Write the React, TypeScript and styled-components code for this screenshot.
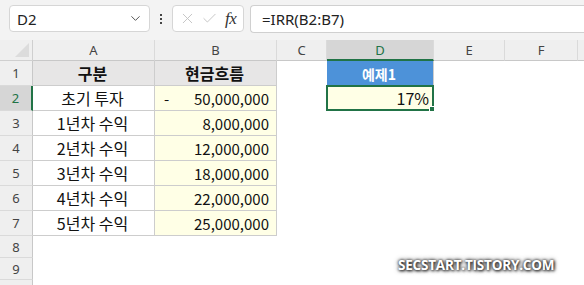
import React from "react";
import styled, { createGlobalStyle } from "styled-components";
import { ChevronDown, X, Check } from "lucide-react";

const GlobalStyle = createGlobalStyle`
  body {
    margin: 0;
    background: #fff;
    font-family: "Noto Sans", "Noto Sans CJK KR", sans-serif;
  }
`;

const GREEN = "#217346";

const Page = styled.div`
  position: relative;
  width: 584px;
  height: 285px;
  overflow: hidden;
  background: #fff;
`;

const FormulaBar = styled.div`
  height: 40px;
  box-sizing: border-box;
  background: #f3f3f3;
  display: flex;
  align-items: flex-start;
  padding: 5px 0 0 9px;
`;

const NameBox = styled.div`
  width: 141px;
  height: 27px;
  box-sizing: border-box;
  background: #fff;
  border: 1px solid #d6d6d6;
  border-radius: 4px;
  display: flex;
  align-items: center;
  justify-content: space-between;
  padding: 0 6px 0 7px;
  font-size: 15px;
  color: #222;
`;

const Dots = styled.div`
  width: 22px;
  height: 27px;
  display: flex;
  flex-direction: column;
  align-items: center;
  justify-content: center;
  gap: 2px;
  span {
    width: 2px;
    height: 2px;
    background: #444;
  }
`;

const FxBox = styled.div`
  width: 72px;
  height: 27px;
  box-sizing: border-box;
  background: #fff;
  border: 1px solid #d6d6d6;
  border-radius: 4px;
  display: flex;
  align-items: center;
  padding: 0 0 0 6px;
  gap: 5px;
  color: #c2c2c2;
`;

const Fx = styled.span`
  font-family: "Liberation Serif", serif;
  font-style: italic;
  font-size: 17px;
  color: #333;
  margin-left: 2px;
  letter-spacing: -0.5px;
`;

const FormulaInput = styled.div`
  flex: 1;
  margin-left: 6px;
  height: 28px;
  box-sizing: border-box;
  background: #fff;
  border: 1px solid #d0d0d0;
  border-right: none;
  border-radius: 4px 0 0 4px;
  display: flex;
  align-items: center;
  padding-left: 11px;
  font-size: 15px;
  color: #222;
`;

const Sheet = styled.div`
  display: grid;
  grid-template-columns: 33px 122px 122px 50px 107px 71px 73px 1fr;
  grid-template-rows: 21px repeat(7, 25px) repeat(3, 22px);
`;

const Corner = styled.div`
  background: #efefef;
  border-right: 1px solid #cfcfcf;
  border-bottom: 1px solid #cfcfcf;
  box-sizing: border-box;
  position: relative;
  &::after {
    content: "";
    position: absolute;
    right: 3px;
    bottom: 3px;
    border-left: 14px solid transparent;
    border-bottom: 14px solid #dcdcdc;
  }
`;

const ColHead = styled.div<{ $active?: boolean }>`
  box-sizing: border-box;
  background: ${(p) => (p.$active ? "#d6d6d6" : "#efefef")};
  border-right: 1px solid #dadada;
  border-bottom: ${(p) => (p.$active ? `2px solid ${GREEN}` : "1px solid #c8c8c8")};
  display: flex;
  align-items: center;
  justify-content: center;
  font-size: 13px;
  color: ${(p) => (p.$active ? GREEN : "#444")};
`;

const RowHead = styled.div<{ $active?: boolean }>`
  box-sizing: border-box;
  background: ${(p) => (p.$active ? "#d6d6d6" : "#efefef")};
  border-right: ${(p) => (p.$active ? `2px solid ${GREEN}` : "1px solid #c8c8c8")};
  border-bottom: 1px solid #dadada;
  display: flex;
  align-items: center;
  justify-content: center;
  font-size: 13px;
  color: ${(p) => (p.$active ? GREEN : "#444")};
`;

type Kind = "empty" | "head" | "label" | "value" | "title" | "result";

const Cell = styled.div<{ $kind: Kind }>`
  box-sizing: border-box;
  display: flex;
  align-items: center;
  position: relative;
  font-family: "Noto Sans CJK KR", "Noto Sans", sans-serif;
  font-size: ${(p) => (p.$kind === "head" || p.$kind === "label" ? "16px" : "15px")};
  color: #111;
  padding: 0 7px 0 5px;
  justify-content: ${(p) =>
    p.$kind === "value" || p.$kind === "result" ? "flex-end" : "center"};
  background: ${(p) =>
    p.$kind === "head"
      ? "#e7e6e6"
      : p.$kind === "value" || p.$kind === "result"
      ? "#ffffe6"
      : p.$kind === "title"
      ? "#4d92d9"
      : "#fff"};
  font-weight: ${(p) => (p.$kind === "head" || p.$kind === "title" ? 700 : 400)};
  ${(p) =>
    p.$kind === "head" || p.$kind === "label" || p.$kind === "value"
      ? "border-right: 1px solid #cdcdcd; border-bottom: 1px solid #cdcdcd;"
      : ""}
  ${(p) =>
    p.$kind === "title"
      ? "color: #fff; font-size: 14px; border-right: 1px solid #cdcdcd;"
      : ""}
  ${(p) =>
    p.$kind === "result"
      ? `border: 2px solid ${GREEN}; margin: -1px 0 0 -1px; padding-right: 3px; font-size: 16px;`
      : ""}
`;

const Minus = styled.span`
  position: absolute;
  left: 9px;
`;

const Handle = styled.span`
  position: absolute;
  right: -4px;
  bottom: -4px;
  width: 5px;
  height: 5px;
  background: ${GREEN};
  border: 1px solid #fff;
`;

const Watermark = styled.div`
  position: absolute;
  left: 398px;
  top: 256px;
  font-family: "Open Sans", "Noto Sans", sans-serif;
  font-weight: 700;
  font-size: 13.5px;
  letter-spacing: -0.2px;
  color: #fff;
  text-shadow: 0 0 3px #333, 1px 1px 3px #222, 0 0 5px #555;
`;

const cols = ["A", "B", "C", "D", "E", "F"];

const rows: { a: string; b: string }[] = [
  { a: "구분", b: "현금흐름" },
  { a: "초기 투자", b: "50,000,000" },
  { a: "1년차 수익", b: "8,000,000" },
  { a: "2년차 수익", b: "12,000,000" },
  { a: "3년차 수익", b: "18,000,000" },
  { a: "4년차 수익", b: "22,000,000" },
  { a: "5년차 수익", b: "25,000,000" },
];

export default function App() {
  return (
    <Page>
      <GlobalStyle />
      <FormulaBar>
        <NameBox>
          <span>D2</span>
          <ChevronDown size={15} color="#555" strokeWidth={1.6} />
        </NameBox>
        <Dots>
          <span />
          <span />
          <span />
        </Dots>
        <FxBox>
          <X size={17} strokeWidth={1.3} />
          <Check size={17} strokeWidth={1.3} />
          <Fx>fx</Fx>
        </FxBox>
        <FormulaInput>=IRR(B2:B7)</FormulaInput>
      </FormulaBar>
      <Sheet>
        <Corner />
        {cols.map((c) => (
          <ColHead key={c} $active={c === "D"}>
            {c}
          </ColHead>
        ))}
        <ColHead />
        {Array.from({ length: 10 }).map((_, i) => {
          const r = rows[i];
          return (
            <React.Fragment key={i}>
              <RowHead $active={i === 1}>{i < 9 ? i + 1 : ""}</RowHead>
              {r ? (
                <>
                  <Cell $kind={i === 0 ? "head" : "label"}>{r.a}</Cell>
                  <Cell $kind={i === 0 ? "head" : "value"}>
                    {i === 1 && <Minus>-</Minus>}
                    {r.b}
                  </Cell>
                </>
              ) : (
                <>
                  <Cell $kind="empty" />
                  <Cell $kind="empty" />
                </>
              )}
              <Cell $kind="empty" />
              {i === 0 ? (
                <Cell $kind="title">예제1</Cell>
              ) : i === 1 ? (
                <Cell $kind="result">
                  17%
                  <Handle />
                </Cell>
              ) : (
                <Cell $kind="empty" />
              )}
              <Cell $kind="empty" />
              <Cell $kind="empty" />
              <Cell $kind="empty" />
            </React.Fragment>
          );
        })}
      </Sheet>
      <Watermark>SECSTART.TISTORY.COM</Watermark>
    </Page>
  );
}
